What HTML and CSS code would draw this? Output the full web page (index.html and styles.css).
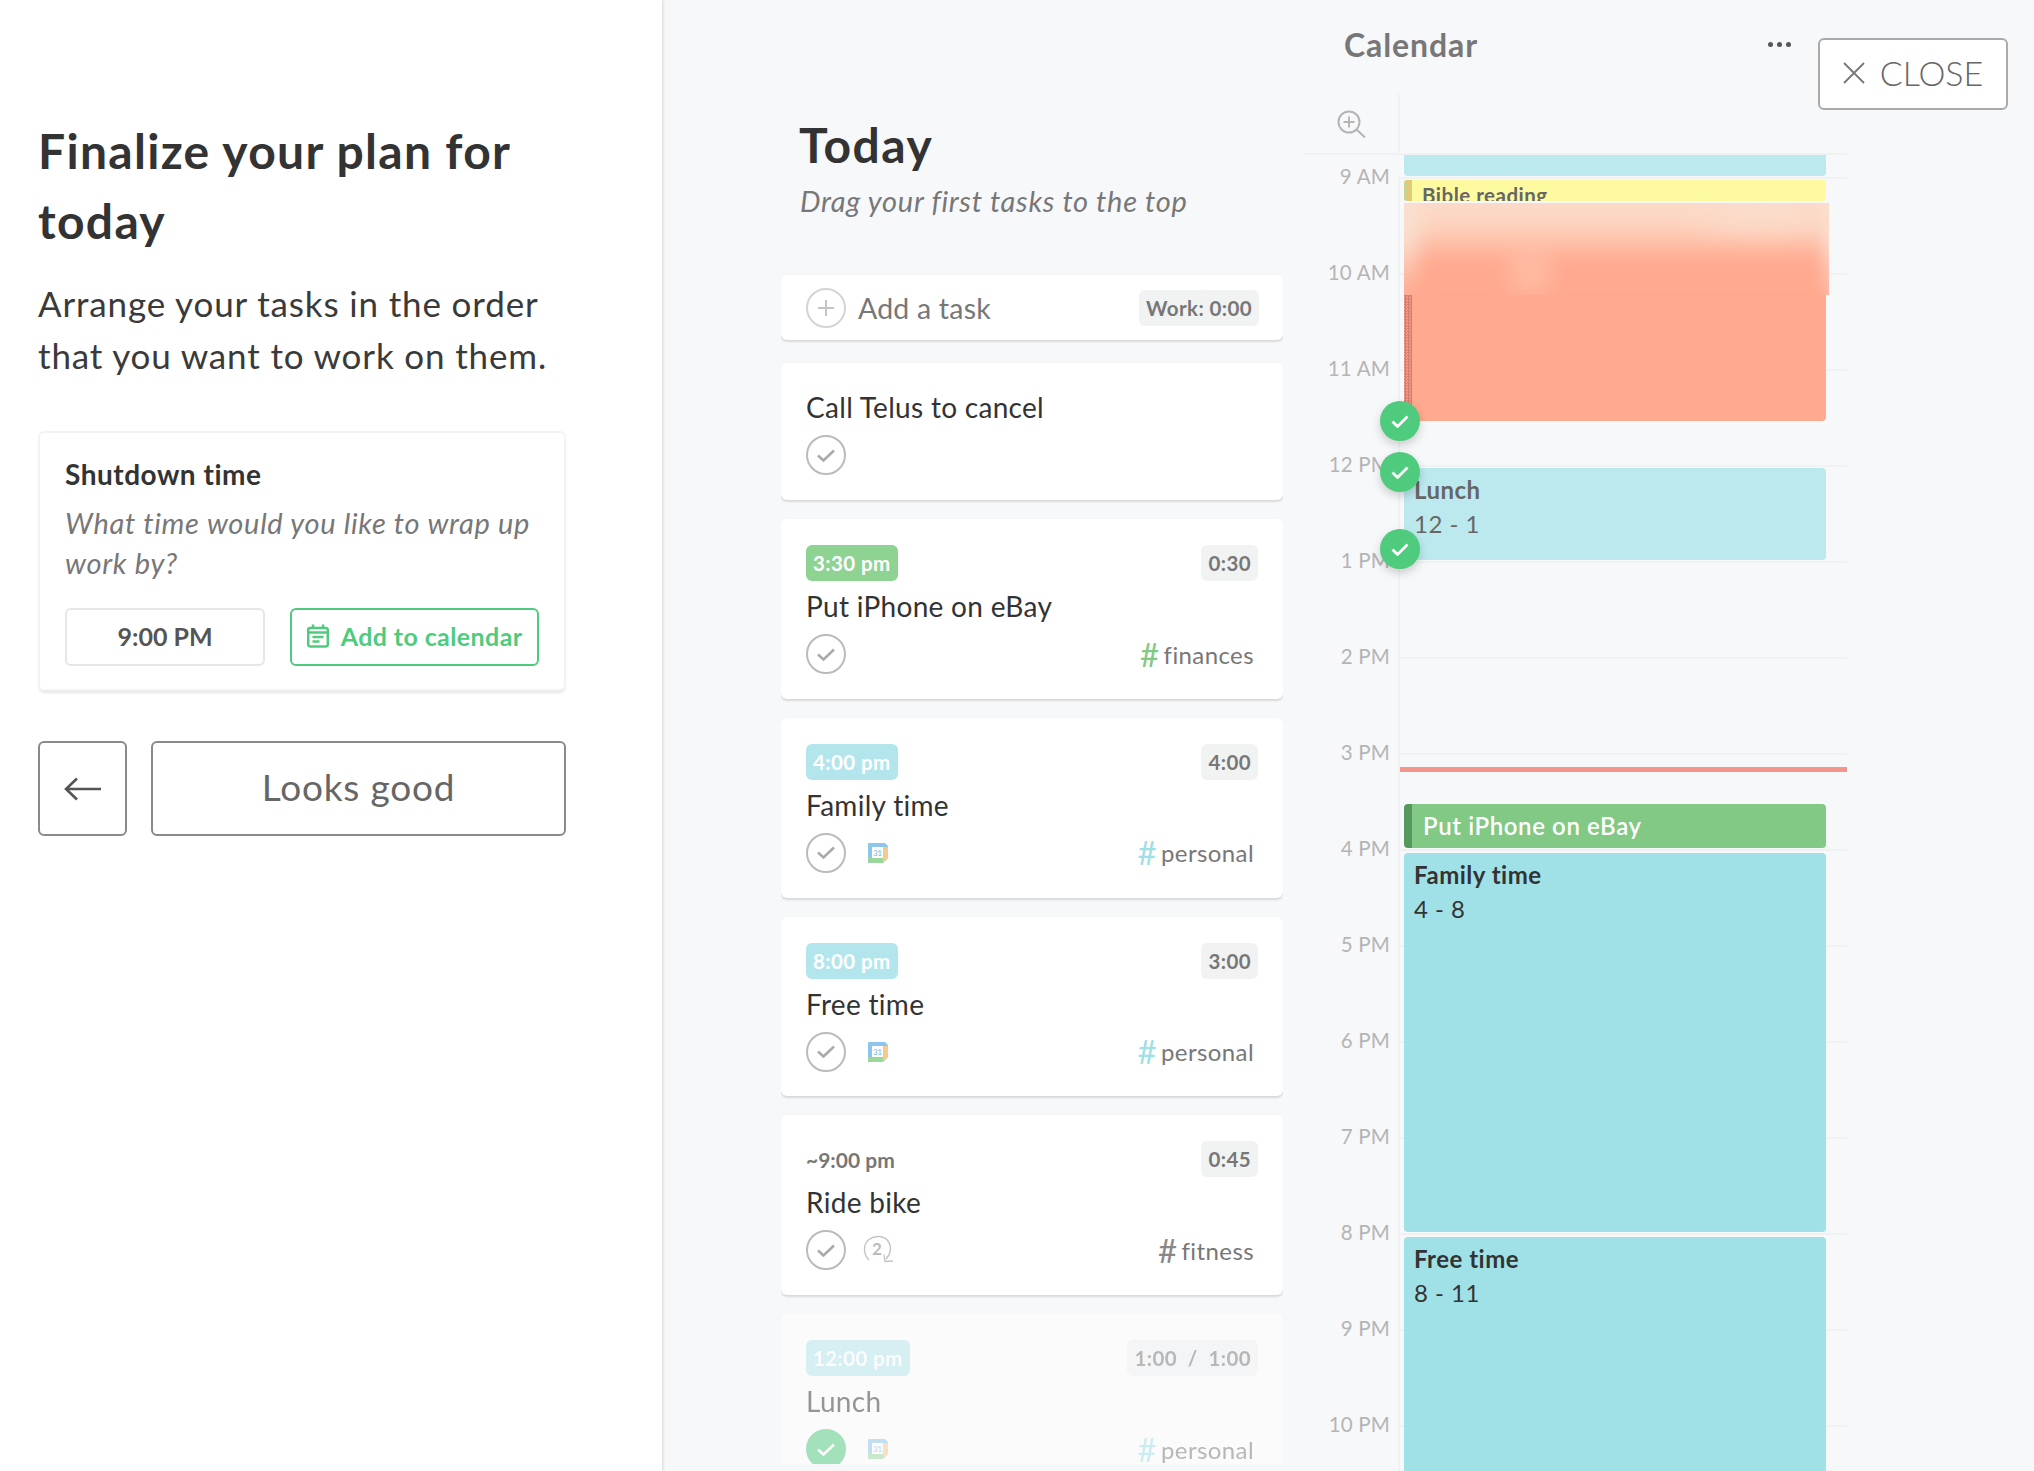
FILE: index.html
```html
<!DOCTYPE html>
<html lang="en">
<head>
  <meta charset="UTF-8">
  <meta name="viewport" content="width=device-width, initial-scale=1.0">
  <title>Finalize your plan</title>
  <link rel="stylesheet" href="styles.css">
</head>
<body>
  <div class="app">
    <aside class="plan">
      <h1>Finalize your plan for today</h1>
      <p class="plan-intro">Arrange your tasks in the order that you want to work on them.</p>
      <div class="shutdown">
        <h3>Shutdown time</h3>
        <p>What time would you like to wrap up work by?</p>
        <div class="shutdown-row">
          <div class="time-input">9:00 PM</div>
          <button class="add-calendar">
            <svg width="22" height="24" viewBox="0 0 22 24" fill="none" stroke="#4ecb7c" stroke-width="2.5">
              <rect x="1.2" y="4" width="19.6" height="18.6" rx="2"/>
              <path d="M1.2 8.5h19.6M6 0.5v4M16 0.5v4M5.5 13h11M5.5 17.5h7"/>
            </svg>
            Add to calendar
          </button>
        </div>
      </div>
      <div class="plan-actions">
        <button class="btn-back">
          <svg width="38" height="24" viewBox="0 0 38 24" fill="none" stroke="#555" stroke-width="2.6">
            <path d="M37 12H2M13 1.500L2 12l11 10.500"/>
          </svg>
        </button>
        <button class="btn-good">Looks good</button>
      </div>
    </aside>

    <main class="board">
      <section class="today">
        <h2>Today</h2>
        <p class="today-hint">Drag your first tasks to the top</p>

        <div class="add-task">
          <span class="circle plus">
            <svg width="18" height="18" viewBox="0 0 18 18" stroke="#c4c4c4" stroke-width="2"><path d="M9 1v16M1 9h16"/></svg>
          </span>
          <span class="add-label">Add a task</span>
          <span class="pill work">Work: 0:00</span>
        </div>

        <div class="tasks">
          <div class="task task-plain">
            <div class="task-title">Call Telus to cancel</div>
            <div class="task-foot">
              <span class="circle"><svg class="tick" width="18" height="13" viewBox="0 0 18 13" fill="none" stroke="#aaa" stroke-width="2.6"><path d="M1 6.500l5.500 5L17 1.500"/></svg></span>
            </div>
          </div>

          <div class="task">
            <div class="task-head">
              <span class="pill when when-green">3:30 pm</span>
              <span class="pill">0:30</span>
            </div>
            <div class="task-title">Put iPhone on eBay</div>
            <div class="task-foot">
              <span class="circle"><svg class="tick" width="18" height="13" viewBox="0 0 18 13" fill="none" stroke="#aaa" stroke-width="2.6"><path d="M1 6.500l5.500 5L17 1.500"/></svg></span>
              <span class="tag"><b class="hash hash-green">#</b>finances</span>
            </div>
          </div>

          <div class="task">
            <div class="task-head">
              <span class="pill when when-blue">4:00 pm</span>
              <span class="pill">4:00</span>
            </div>
            <div class="task-title">Family time</div>
            <div class="task-foot">
              <span class="circle"><svg class="tick" width="18" height="13" viewBox="0 0 18 13" fill="none" stroke="#aaa" stroke-width="2.6"><path d="M1 6.500l5.500 5L17 1.500"/></svg></span>
              <svg class="gcal" width="20" height="20" viewBox="0 0 20 20">
                <path d="M1 0h16l3 3v12l-5 5H1a1 1 0 0 1-1-1V1a1 1 0 0 1 1-1z" fill="#8cc6ea"/>
                <path d="M0 15h15v5H1a1 1 0 0 1-1-1z" fill="#9ad79d"/>
                <path d="M15 4h5v11l-5 5z" fill="#f8c98e"/>
                <rect x="4" y="4" width="11" height="11" fill="#fff"/>
                <text x="9.500" y="12.500" text-anchor="middle" class="gcal-num">31</text>
              </svg>
              <span class="tag"><b class="hash hash-blue">#</b>personal</span>
            </div>
          </div>

          <div class="task">
            <div class="task-head">
              <span class="pill when when-blue">8:00 pm</span>
              <span class="pill">3:00</span>
            </div>
            <div class="task-title">Free time</div>
            <div class="task-foot">
              <span class="circle"><svg class="tick" width="18" height="13" viewBox="0 0 18 13" fill="none" stroke="#aaa" stroke-width="2.6"><path d="M1 6.500l5.500 5L17 1.500"/></svg></span>
              <svg class="gcal" width="20" height="20" viewBox="0 0 20 20">
                <path d="M1 0h16l3 3v12l-5 5H1a1 1 0 0 1-1-1V1a1 1 0 0 1 1-1z" fill="#8cc6ea"/>
                <path d="M0 15h15v5H1a1 1 0 0 1-1-1z" fill="#9ad79d"/>
                <path d="M15 4h5v11l-5 5z" fill="#f8c98e"/>
                <rect x="4" y="4" width="11" height="11" fill="#fff"/>
                <text x="9.500" y="12.500" text-anchor="middle" class="gcal-num">31</text>
              </svg>
              <span class="tag"><b class="hash hash-blue">#</b>personal</span>
            </div>
          </div>

          <div class="task">
            <div class="task-head">
              <span class="when-plain">~9:00 pm</span>
              <span class="pill">0:45</span>
            </div>
            <div class="task-title">Ride bike</div>
            <div class="task-foot">
              <span class="circle"><svg class="tick" width="18" height="13" viewBox="0 0 18 13" fill="none" stroke="#aaa" stroke-width="2.6"><path d="M1 6.500l5.500 5L17 1.500"/></svg></span>
              <svg class="repeat" width="32" height="30" viewBox="0 0 32 30" fill="none" stroke="#c4c4c4" stroke-width="1.400">
                <path d="M6 25C0 19 0 9 6 4.500c6-4.500 15-4 19 1.500 4 5.500 3 13-2 18"/>
                <path d="M21 19.500l1 7 8-.5"/>
                <text x="14" y="20" text-anchor="middle" class="repeat-num">2</text>
              </svg>
              <span class="tag"><b class="hash hash-grey">#</b>fitness</span>
            </div>
          </div>

          <div class="task task-done">
            <div class="task-head">
              <span class="pill when when-blue">12:00 pm</span>
              <span class="pill">1:00 &nbsp;/&nbsp; 1:00</span>
            </div>
            <div class="task-title">Lunch</div>
            <div class="task-foot">
              <span class="circle circle-done"><svg class="tick" width="18" height="13" viewBox="0 0 18 13" fill="none" stroke="#fff" stroke-width="2.6"><path d="M1 6.500l5.500 5L17 1.500"/></svg></span>
              <svg class="gcal" width="20" height="20" viewBox="0 0 20 20">
                <path d="M1 0h16l3 3v12l-5 5H1a1 1 0 0 1-1-1V1a1 1 0 0 1 1-1z" fill="#8cc6ea"/>
                <path d="M0 15h15v5H1a1 1 0 0 1-1-1z" fill="#9ad79d"/>
                <path d="M15 4h5v11l-5 5z" fill="#f8c98e"/>
                <rect x="4" y="4" width="11" height="11" fill="#fff"/>
                <text x="9.500" y="12.500" text-anchor="middle" class="gcal-num">31</text>
              </svg>
              <span class="tag"><b class="hash hash-blue">#</b>personal</span>
            </div>
          </div>
        </div>
      </section>

      <section class="calendar">
        <div class="cal-head">
          <span class="cal-title">Calendar</span>
          <span class="cal-dots"><i></i><i></i><i></i></span>
        </div>
        <div class="cal-tools">
          <svg width="30" height="28" viewBox="0 0 30 28" fill="none" stroke="#b5b5b5" stroke-width="2">
            <circle cx="12" cy="12" r="10.500"/>
            <path d="M12 6.500v11M6.500 12h11M19.500 19.500L28 27.500"/>
          </svg>
        </div>
        <div class="cal-grid">
          <div class="hour"><span>9 AM</span><div class="slot"></div></div>
          <div class="hour"><span>10 AM</span><div class="slot"></div></div>
          <div class="hour"><span>11 AM</span><div class="slot"></div></div>
          <div class="hour"><span>12 PM</span><div class="slot"></div></div>
          <div class="hour"><span>1 PM</span><div class="slot"></div></div>
          <div class="hour"><span>2 PM</span><div class="slot"></div></div>
          <div class="hour"><span>3 PM</span><div class="slot"></div></div>
          <div class="hour"><span>4 PM</span><div class="slot"></div></div>
          <div class="hour"><span>5 PM</span><div class="slot"></div></div>
          <div class="hour"><span>6 PM</span><div class="slot"></div></div>
          <div class="hour"><span>7 PM</span><div class="slot"></div></div>
          <div class="hour"><span>8 PM</span><div class="slot"></div></div>
          <div class="hour"><span>9 PM</span><div class="slot"></div></div>
          <div class="hour"><span>10 PM</span><div class="slot"></div></div>

          <div class="now-line"></div>

          <div class="event ev-morning"></div>
          <div class="event ev-bible"><span>Bible reading</span></div>
          <div class="event ev-salmon"><div class="ev-smudge"></div></div>
          <div class="event ev-lunch"><strong>Lunch</strong><span>12 - 1</span></div>
          <div class="event ev-ebay"><span>Put iPhone on eBay</span></div>
          <div class="event ev-family"><strong>Family time</strong><span>4 - 8</span></div>
          <div class="event ev-free"><strong>Free time</strong><span>8 - 11</span></div>

          <span class="done-dot dot-1"><svg width="18" height="13" viewBox="0 0 18 13" fill="none" stroke="#fff" stroke-width="2.800"><path d="M1.500 6.500l5 5L16.500 1.500"/></svg></span>
          <span class="done-dot dot-2"><svg width="18" height="13" viewBox="0 0 18 13" fill="none" stroke="#fff" stroke-width="2.800"><path d="M1.500 6.500l5 5L16.500 1.500"/></svg></span>
          <span class="done-dot dot-3"><svg width="18" height="13" viewBox="0 0 18 13" fill="none" stroke="#fff" stroke-width="2.800"><path d="M1.500 6.500l5 5L16.500 1.500"/></svg></span>
        </div>
      </section>
    </main>

    <button class="close-btn">
      <svg width="22" height="22" viewBox="0 0 22 22" stroke="#777" stroke-width="1.800"><path d="M1 1l20 20M21 1L1 21"/></svg>
      CLOSE
    </button>
  </div>
</body>
</html>
```

FILE: styles.css
```css
* {
  box-sizing: border-box;
}
html, body {
  height: 100%;
}
body {
  margin: 0;
  font-family: 'Lato', sans-serif;
  color: #333;
  background: #fff;
  overflow: hidden;
}
button {
  font-family: inherit;
  background: #fff;
  cursor: pointer;
}
.app {
  display: flex;
  height: 1471px;
  position: relative;
}

/* left column */
.plan {
  width: 662px;
  flex-shrink: 0;
  padding: 116px 96px 0 38px;
  background: #fff;
  box-shadow: 1px 0 3px rgba(0, 0, 0, 0.14);
  position: relative;
  z-index: 1;
}
.plan h1 {
  margin: 0;
  font-size: 48px;
  line-height: 70px;
  font-weight: 700;
  letter-spacing: 1.3px;
}
.plan-intro {
  margin: 21px 0 0;
  font-size: 35px;
  line-height: 52px;
  letter-spacing: 0.85px;
  color: #3a3a3a;
}
.shutdown {
  margin-top: 50px;
  height: 260px;
  padding: 22px 25px 0;
  background: #fff;
  border: 2px solid #f3f3f3;
  border-radius: 6px;
  box-shadow: 0 3px 3px -1px rgba(0, 0, 0, 0.1);
}
.shutdown h3 {
  margin: 0;
  font-size: 28px;
  line-height: 38px;
  font-weight: 700;
  letter-spacing: 0.5px;
}
.shutdown p {
  margin: 10px 0 0;
  font-size: 29px;
  line-height: 40px;
  font-style: italic;
  color: #777;
  letter-spacing: 0.7px;
}
.shutdown-row {
  display: flex;
  gap: 25px;
  margin-top: 25px;
}
.time-input {
  width: 201px;
  height: 58px;
  padding-bottom: 2px;
  border: 2px solid #e6e6e6;
  border-radius: 6px;
  display: flex;
  align-items: center;
  justify-content: center;
  font-size: 25px;
  font-weight: 700;
  color: #555;
}
.add-calendar {
  width: 250px;
  height: 58px;
  border: 2px solid #4ecb7c;
  border-radius: 6px;
  display: flex;
  align-items: center;
  justify-content: center;
  gap: 12px;
  padding: 0 0 2px;
  font-size: 25px;
  font-weight: 700;
  color: #4ecb7c;
  letter-spacing: 0.4px;
}
.plan-actions {
  display: flex;
  gap: 24px;
  margin-top: 50px;
}
.btn-back {
  width: 89px;
  height: 95px;
  border: 2px solid #8a8a8a;
  border-radius: 6px;
  display: flex;
  align-items: center;
  justify-content: center;
  padding: 0;
}
.btn-good {
  flex: 1;
  height: 95px;
  padding: 0 0 4px;
  border: 2px solid #8a8a8a;
  border-radius: 6px;
  font-size: 37px;
  color: #666;
  letter-spacing: 0.8px;
}

/* middle + calendar */
.board {
  flex: 1;
  display: flex;
  gap: 21px;
  padding-left: 119px;
  background: #f7f8fa;
  height: 1471px;
}
.today {
  width: 502px;
  height: 1464px;
  overflow: hidden;
  flex-shrink: 0;
  padding-top: 115px;
}
.today h2 {
  margin: 0 0 0 18px;
  font-size: 48px;
  line-height: 60px;
  font-weight: 700;
  letter-spacing: 1.5px;
}
.today-hint {
  margin: 4px 0 0 19px;
  font-size: 29px;
  line-height: 44px;
  font-style: italic;
  color: #777;
  letter-spacing: 0.7px;
}
.add-task {
  margin-top: 52px;
  height: 65px;
  padding: 0 24px 0 25px;
  background: #fff;
  border-radius: 6px;
  box-shadow: 0 2px 2px rgba(0, 0, 0, 0.12), 0 0 2px rgba(0, 0, 0, 0.04);
  display: flex;
  align-items: center;
}
.add-label {
  margin-left: 12px;
  font-size: 28.500px;
  color: #777;
  letter-spacing: 0.2px;
}
.circle {
  width: 40px;
  height: 40px;
  flex-shrink: 0;
  border: 2px solid #bbb;
  border-radius: 50%;
  display: flex;
  align-items: center;
  justify-content: center;
}
.plus {
  border-color: #d4d4d4;
}
.circle-done {
  background: #4ecb7c;
  border-color: #4ecb7c;
}
.pill {
  height: 36px;
  padding: 0 7px;
  background: #f1f2f2;
  border-radius: 6px;
  display: inline-flex;
  align-items: center;
  font-size: 20.500px;
  font-weight: 700;
  color: #777;
  letter-spacing: 0.4px;
}
.work {
  margin-left: auto;
}
.tasks {
  margin-top: 23px;
  display: flex;
  flex-direction: column;
  gap: 19px;
}
.task {
  height: 179.800px;
  padding: 26px 25px 0 25px;
  background: #fff;
  border-radius: 6px;
  box-shadow: 0 2px 2px rgba(0, 0, 0, 0.12), 0 0 2px rgba(0, 0, 0, 0.04);
  flex-shrink: 0;
}
.task-plain {
  height: 137px;
  padding-top: 19px;
}
.task-head {
  height: 36px;
  display: flex;
  align-items: center;
  justify-content: space-between;
}
.when {
  color: #fff;
}
.when-green {
  background: #8fd392;
}
.when-blue {
  background: #b3e6ec;
}
.when-plain {
  font-size: 21px;
  font-weight: 700;
  color: #777;
}
.task-title {
  margin-bottom: 2px;
  font-size: 28px;
  line-height: 51px;
  letter-spacing: 0.3px;
  color: #333;
}
.task-foot {
  height: 40px;
  display: flex;
  align-items: center;
}
.gcal {
  margin-left: 22px;
}
.gcal-num {
  font-family: 'Lato', sans-serif;
  font-size: 7.500px;
  font-weight: 700;
  fill: #8cc6ea;
}
.repeat {
  margin-left: 17px;
}
.repeat-num {
  font-family: 'Lato', sans-serif;
  font-size: 17px;
  font-weight: 700;
  fill: #bbb;
  stroke: none;
}
.tag {
  margin-left: auto;
  margin-right: 4px;
  font-size: 24px;
  color: #777;
  letter-spacing: 0.4px;
  display: flex;
  align-items: center;
}
.hash {
  font-weight: 400;
  font-size: 33px;
  margin-right: 4px;
  line-height: 1;
}
.hash-green {
  color: #81c984;
}
.hash-blue {
  color: #9fe0e6;
}
.hash-grey {
  color: #888;
}
.task-done {
  opacity: 0.5;
}

/* calendar */
.calendar {
  width: 543px;
  flex-shrink: 0;
  height: 1471px;
  display: flex;
  flex-direction: column;
}
.cal-head {
  height: 94px;
  padding: 24px 56px 0 40px;
  display: flex;
  justify-content: space-between;
}
.cal-title {
  font-size: 32px;
  line-height: 42px;
  font-weight: 700;
  color: #777;
  letter-spacing: 0.9px;
}
.cal-dots {
  display: flex;
  gap: 4px;
  margin-top: 18px;
}
.cal-dots i {
  width: 5px;
  height: 5px;
  border-radius: 50%;
  background: #555;
}
.cal-tools {
  height: 61px;
  padding: 16px 0 0 33px;
  border-bottom: 2px solid #f0f1f3;
  position: relative;
}
.cal-tools::after {
  content: '';
  position: absolute;
  left: 94px;
  top: 0;
  bottom: 0;
  border-left: 2px solid #f0f1f3;
}
.cal-grid {
  flex: 1;
  padding-top: 22px;
  position: relative;
  overflow: hidden;
}
.hour {
  height: 96px;
  display: flex;
}
.hour span {
  width: 86px;
  margin-top: -15px;
  height: 28px;
  font-size: 20.500px;
  line-height: 28px;
  text-align: right;
  color: #b5b5b5;
  letter-spacing: 0.2px;
}
.slot {
  flex: 1;
  margin-left: 8px;
  border-top: 2px solid #f0f1f3;
  border-left: 2px solid #f0f1f3;
}
.now-line {
  position: absolute;
  left: 96px;
  right: 0;
  top: 612px;
  height: 5px;
  background: #f4978a;
}
.event {
  position: absolute;
  left: 100px;
  width: 422px;
  border-radius: 4px;
  padding: 5px 10px;
  font-size: 24px;
  line-height: 34px;
  color: #444;
  letter-spacing: 0.5px;
  overflow: hidden;
}
.event strong, .event span {
  display: block;
}
.event strong {
  font-weight: 700;
}
.ev-morning {
  top: -4px;
  height: 25px;
  background: #bce9ee;
}
.ev-bible {
  top: 25px;
  height: 21px;
  padding: 0 0 0 18px;
  background: #fefaa0;
  color: #666;
  font-size: 20.500px;
  line-height: 30px;
  font-weight: 700;
  border-radius: 3px;
}
.ev-bible::before, .ev-salmon::before {
  content: '';
  position: absolute;
  left: 0;
  top: 0;
  bottom: 0;
  width: 8px;
  background: repeating-conic-gradient(#efc766 0 25%, #bcd59b 0 50%) 0 0 / 3px 3px;
}
.ev-salmon::before {
  background: repeating-conic-gradient(#d97a6e 0 25%, #f09a88 0 50%) 0 0 / 3px 3px;
}
.ev-salmon {
  top: 48px;
  height: 218px;
  padding: 0;
  background: #ffa98f;
  overflow: visible;
}
.ev-smudge {
  position: absolute;
  left: 0;
  right: -3px;
  top: 0;
  height: 92px;
  overflow: hidden;
  background: #ffa98f;
}
.ev-smudge::before {
  content: '';
  position: absolute;
  inset: -12px;
  filter: blur(7px);
  background:
    radial-gradient(ellipse 34px 34px at 138px 81px, rgba(255, 205, 180, 0.6), transparent),
    radial-gradient(ellipse 90px 30px at 370px 26px, #fbdccb, transparent),
    radial-gradient(ellipse 30px 70px at 8px 40px, #f9e4d8, transparent),
    radial-gradient(ellipse 16px 80px at 442px 50px, #fbe8dd, transparent),
    linear-gradient(to bottom, #fbdccb 10px, #fdd3bd 30%, #ffa98f 62%);
}
.ev-lunch {
  top: 313px;
  height: 92px;
  background: #bce9ee;
  color: #666;
}
.ev-ebay {
  top: 649px;
  height: 44px;
  padding: 5px 0 0 11px;
  background: #81c984;
  border-left: 8px solid #57985c;
  color: #fff;
  font-weight: 600;
  letter-spacing: 0.6px;
}
.ev-family {
  top: 698px;
  height: 379px;
  background: #a0e1e7;
  color: #333;
}
.ev-free {
  top: 1082px;
  height: 400px;
  background: #a0e1e7;
  color: #333;
}
.done-dot {
  position: absolute;
  left: 76px;
  width: 40px;
  height: 40px;
  border-radius: 50%;
  background: #4ecb7c;
  box-shadow: 0 4px 10px rgba(0, 0, 0, 0.18);
  display: flex;
  align-items: center;
  justify-content: center;
}
.dot-1 {
  top: 246px;
}
.dot-2 {
  top: 297px;
}
.dot-3 {
  top: 374px;
}
.close-btn {
  position: absolute;
  top: 38px;
  left: 1818px;
  width: 190px;
  height: 72px;
  border: 2px solid #aaa;
  border-radius: 6px;
  display: flex;
  align-items: center;
  justify-content: center;
  gap: 15px;
  padding: 0 0 3px;
  font-size: 34px;
  font-weight: 300;
  color: #666;
  z-index: 2;
}
```
